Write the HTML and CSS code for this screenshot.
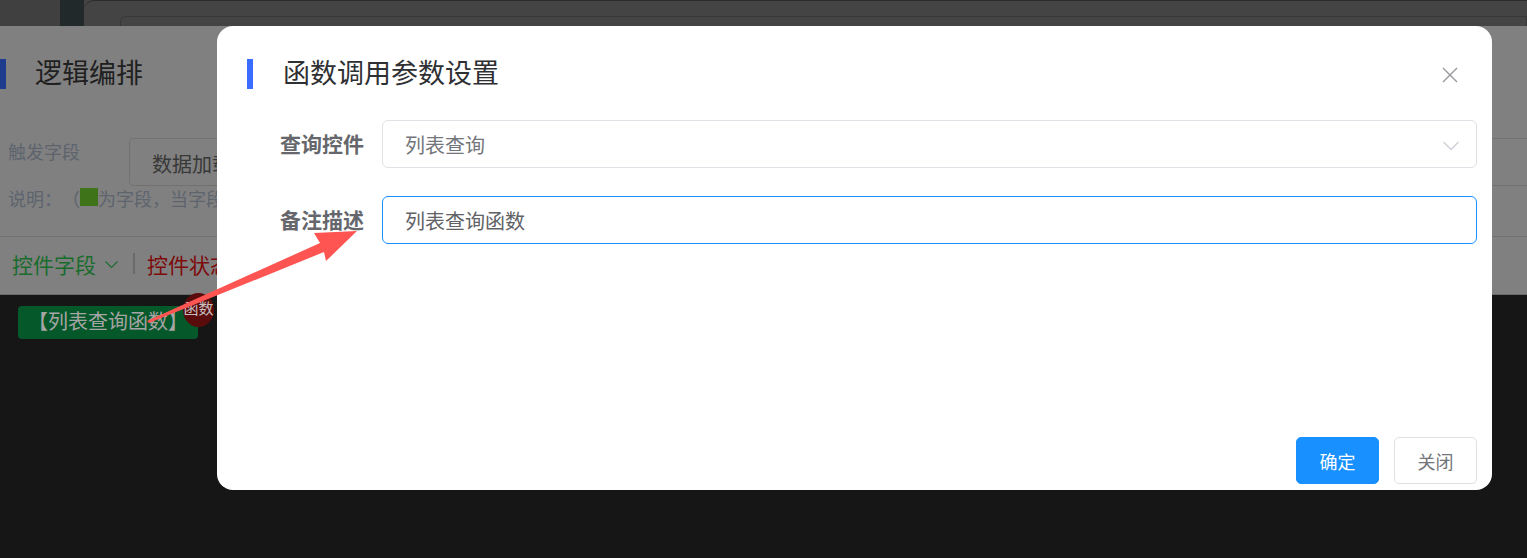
FILE: index.html
```html
<!DOCTYPE html>
<html lang="zh">
<head>
<meta charset="utf-8">
<title>函数调用参数设置</title>
<link rel="stylesheet" href="styles.css">
</head>
<body>
<div class="page">
  <div class="top">
    <div class="top-side"></div>
    <div class="top-gap"></div>
    <div class="top-card"><div class="top-inner"></div></div>
  </div>
  <section class="logic">
    <div class="logic-head"><i class="bar bar-dim"></i><h2 class="logic-title">逻辑编排</h2></div>
    <div class="trigger">
      <span class="trigger-label">触发字段</span>
      <div class="trigger-input">数据加载</div>
    </div>
    <div class="hint">说明：<span class="hint-paren">（</span><i class="swatch"></i>为字段，当字段</div>
    <div class="tabs">
      <span class="tab-green">控件字段</span>
      <svg class="tab-chev" width="15" height="14" viewBox="0 0 15 14"><path d="M1.5 4.5 7.5 10.5l6-6" fill="none" stroke="currentColor" stroke-width="1.1"/></svg>
      <span class="tab-sep"></span>
      <span class="tab-red">控件状态</span>
    </div>
  </section>
  <section class="canvas">
    <div class="node">【列表查询函数】<span class="node-badge">函数</span></div>
  </section>

  <div class="dialog">
    <header class="dialog-head">
      <i class="bar"></i>
      <h1 class="dialog-title">函数调用参数设置</h1>
      <svg class="close" width="18" height="18" viewBox="0 0 18 18"><path d="M2 2l14 14M16 2 2 16" fill="none" stroke="#97979d" stroke-width="1.4"/></svg>
    </header>
    <div class="form">
      <div class="row">
        <label class="row-label">查询控件</label>
        <div class="field field-select">列表查询
          <svg class="chev" width="16" height="10" viewBox="0 0 16 10"><path d="M.5 1 8 8.5 15.5 1" fill="none" stroke="#cfd0d8" stroke-width="1.3"/></svg>
        </div>
      </div>
      <div class="row">
        <label class="row-label">备注描述</label>
        <div class="field field-focus">列表查询函数</div>
      </div>
    </div>
    <footer class="dialog-foot">
      <button class="btn btn-primary">确定</button>
      <button class="btn">关闭</button>
    </footer>
  </div>

  <svg class="arrow" width="1527" height="558" viewBox="0 0 1527 558"><path d="M147 321 L320 243 L314 233 L357 231 L326 261 L324 252 L149 323 Z" fill="#fe5552"/></svg>
</div>
</body>
</html>
```
FILE: styles.css
```css
* { box-sizing: border-box; }
html, body { margin: 0; height: 100%; }
body {
  background: #161616;
  font-family: "Liberation Sans", "Noto Sans CJK SC", sans-serif;
  overflow: hidden;
}
.page { position: relative; width: 1527px; height: 558px; display: flex; flex-direction: column; }
.top { height: 26px; display: flex; background: #444; flex: none; }
.top-side { width: 60px; background: #404040; }
.top-gap { width: 24px; background: #22292b; }
.top-card {
  flex: 1;
  background: #444;
  border-top: 1px solid #2a2c2d;
  border-top-left-radius: 10px;
  padding: 15px 0 0 36px;
}
.top-inner { height: 11px; border: 1px solid #383838; border-bottom: 0; border-top-left-radius: 6px; }
.logic { height: 268px; background: #808080; flex: none; display: flex; flex-direction: column; }
.bar { display: block; width: 6px; height: 30px; background: #3a6dff; flex: none; }
.bar-dim { background: #1d3c8d; }
.logic-head { height: 94px; padding-top: 2px; display: flex; align-items: center; }
.logic-title { margin: 0 0 0 29px; font-size: 27px; font-weight: 400; color: #202020; line-height: 30px; }
.trigger { display: flex; height: 48px; flex: none; margin-top: 18px; }
.trigger-label { margin-left: 8px; width: 121px; font-size: 18px; color: #5e646e; line-height: 30px; }
.trigger-input {
  flex: 1;
  border: 1px solid #717171;
  border-right: 0;
  border-radius: 5px 0 0 5px;
  padding-left: 22px;
  font-size: 20px;
  line-height: 52px;
  color: #383838;
}
.hint { margin: 0 0 0 8px; height: 50px; font-size: 18px; color: #5e646e; line-height: 28px; }
.hint-paren { margin-left: 9px; }
.swatch { display: inline-block; width: 18px; height: 18px; background: #3f7319; vertical-align: 0; }
.tabs { height: 58px; border-top: 1px solid #717171; display: flex; align-items: center; padding: 0 0 4px 12px; font-size: 21px; }
.tab-green { color: #186c2c; }
.tab-chev { color: #186c2c; margin-left: 8px; }
.tab-sep { width: 2px; height: 21px; background: #6a6a6a; margin: 0 12px 0 14px; }
.tab-red { color: #7e0a0a; }
.canvas { flex: 1; background: #161616; border-top: 1px solid #6a6a6a; padding: 11px 0 0 18px; }
.node {
  position: relative;
  width: 180px;
  height: 33px;
  background: #05582a;
  border-radius: 4px;
  color: #a5a5a5;
  font-size: 20px;
  line-height: 33px;
  text-align: center;
  white-space: nowrap;
}
.node-badge {
  position: absolute;
  left: 165px;
  top: -13px;
  width: 31px;
  height: 34px;
  border-radius: 50%;
  background: #5a0c0c;
  color: #c9c0c0;
  font-size: 15px;
  line-height: 32px;
}
.dialog {
  position: absolute;
  left: 217px;
  top: 26px;
  width: 1275px;
  height: 464px;
  background: #fff;
  border-radius: 16px;
  display: flex;
  flex-direction: column;
  padding: 0 15px 6px 30px;
}
.dialog-head { height: 94px; padding-top: 2px; display: flex; align-items: center; flex: none; }
.dialog-title { margin: 0 0 0 30px; flex: 1; font-size: 27px; font-weight: 400; color: #2f3033; line-height: 30px; }
.close { margin: 2px 18px 0 0; }
.form { flex: 1; display: flex; flex-direction: column; gap: 28px; }
.row { display: flex; align-items: center; height: 48px; }
.row-label { width: 117px; flex: none; font-size: 21px; line-height: 50px; height: 48px; font-weight: 700; color: #65676c; text-align: right; }
.field {
  flex: 1;
  height: 48px;
  margin-left: 18px;
  border: 1px solid #e0e0e6;
  border-radius: 6px;
  padding-left: 22px;
  font-size: 20px;
  line-height: 50px;
  color: #73757a;
  position: relative;
}
.field-focus { border-color: #1890ff; color: #606266; }
.chev { position: absolute; right: 17px; top: 20px; }
.dialog-foot { display: flex; justify-content: flex-end; gap: 15px; flex: none; }
.btn {
  width: 83px;
  height: 47px;
  border: 1px solid #e0e0e6;
  border-radius: 5px;
  background: #fff;
  color: #73757a;
  font: 18px "Liberation Sans", "Noto Sans CJK SC", sans-serif;
  padding: 0;
}
.btn-primary { background: #1890ff; border-color: #1890ff; color: #fff; }
.arrow { position: absolute; left: 0; top: 0; pointer-events: none; }
```
